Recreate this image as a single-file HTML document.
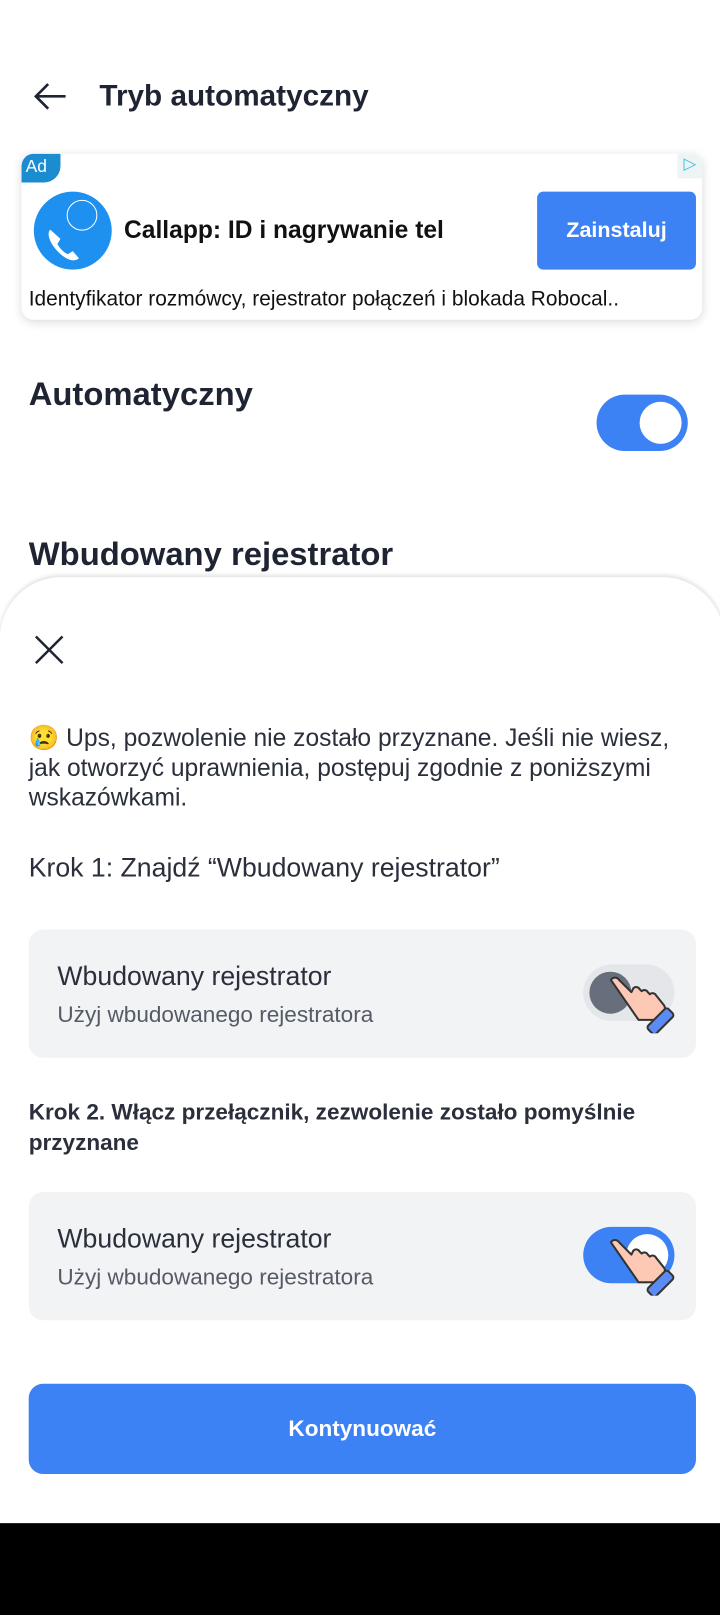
<!DOCTYPE html>
<html><head><meta charset="utf-8"><style>
*{margin:0;padding:0;box-sizing:border-box}
body{width:720px;height:1600px;position:relative;background:#fff;font-family:"Liberation Sans",sans-serif;color:#1f2433;overflow:hidden}
#w{position:absolute;left:0;top:0;width:706px;height:1569px;transform:scale(1.025);transform-origin:0 0}
.a{position:absolute}
</style></head><body><div id="w">
<svg class="a" style="left:32px;top:80px" width="34" height="28" viewBox="0 0 34 28"><path d="M32 14H3M15 2L3 14l12 12" stroke="#1f2433" stroke-width="2.6" fill="none"/></svg>
<div class="a" style="left:97px;top:78px;font-size:29px;font-weight:bold">Tryb automatyczny</div>
<div class="a" style="left:21px;top:150px;width:664px;height:162px;border-radius:12px;background:#fff;box-shadow:0 2px 10px rgba(0,0,0,.15);overflow:hidden">
<div class="a" style="left:0;top:0;width:38px;height:28px;background:#1a8ccf;border-radius:0 0 16px 0;color:#fff;font-size:17px;padding:3px 0 0 4px">Ad</div>
<div class="a" style="left:640px;top:0;width:24px;height:24px;background:#eef3f6;color:#37c0e0;font-size:16px;text-align:center">▷</div>
<div class="a" style="left:12px;top:37px;width:76px;height:76px;border-radius:50%;background:#1e90f0"></div>
<div class="a" style="left:44px;top:45px;width:30px;height:30px;border-radius:50%;border:1.5px solid #fff"></div>
<svg class="a" style="left:22px;top:70px" width="36" height="36" viewBox="0 0 36 36"><path d="M6 4c-4 4 0 14 8 22s16 10 20 6l-6-7-5 3c-4-2-8-6-10-10l3-5z" fill="#fff"/></svg>
<div class="a" style="left:100px;top:61px;font-size:24px;font-weight:bold;color:#111">Callapp: ID i nagrywanie tel</div>
<div class="a" style="left:503px;top:37px;width:155px;height:76px;background:#3d82f4;border-radius:6px;color:#fff;font-size:21px;font-weight:bold;text-align:center;line-height:76px">Zainstaluj</div>
<div class="a" style="left:7px;top:130px;font-size:21px;color:#111;white-space:nowrap;transform:scaleX(.97);transform-origin:0 0">Identyfikator rozmówcy, rejestrator połączeń i blokada Robocal..</div>
</div>
<div class="a" style="left:28px;top:366px;font-size:32px;font-weight:bold">Automatyczny</div>
<div class="a" style="left:582px;top:385px;width:89px;height:55px;border-radius:28px;background:#3d82f4"><div class="a" style="left:42px;top:7px;width:41px;height:41px;border-radius:50%;background:#fff"></div></div>
<div class="a" style="left:28px;top:522px;font-size:32px;font-weight:bold">Wbudowany rejestrator</div>
<div class="a" style="left:0;top:563px;width:706px;height:930px;background:#fff;border-radius:60px 60px 0 0;box-shadow:0 -2px 4px rgba(0,0,0,.12)"></div>
<svg class="a" style="left:33px;top:619px" width="30" height="30" viewBox="0 0 30 30"><path d="M2 2L28 28M28 2L2 28" stroke="#1f2433" stroke-width="2.4"/></svg>
<div class="a" style="left:28px;top:706px;width:650px;font-size:24px;line-height:29px;color:#2a2f3b">😢 Ups, pozwolenie nie zostało przyznane. Jeśli nie wiesz, jak otworzyć uprawnienia, postępuj zgodnie z poniższymi wskazówkami.</div>
<div class="a" style="left:28px;top:831px;font-size:26px;color:#2a2f3b">Krok 1: Znajdź “Wbudowany rejestrator”</div>
<div class="a" style="left:28px;top:907px;width:651px;height:125px;background:#f2f3f5;border-radius:14px"></div>
<div class="a" style="left:56px;top:937px;font-size:26px;color:#2a2f3b">Wbudowany rejestrator</div>
<div class="a" style="left:56px;top:977px;font-size:22px;color:#555b66">Użyj wbudowanego rejestratora</div>
<div class="a" style="left:569px;top:941px;width:89px;height:55px;border-radius:28px;background:#e4e6ea"><div class="a" style="left:6px;top:7px;width:41px;height:41px;border-radius:50%;background:#676e7c"></div></div>
<div class="a" style="left:28px;top:1070px;width:660px;font-size:22px;font-weight:bold;line-height:30px;color:#2a2f3b">Krok 2. Włącz przełącznik, zezwolenie zostało pomyślnie przyznane</div>
<div class="a" style="left:28px;top:1163px;width:651px;height:125px;background:#f2f3f5;border-radius:14px"></div>
<div class="a" style="left:56px;top:1193px;font-size:26px;color:#2a2f3b">Wbudowany rejestrator</div>
<div class="a" style="left:56px;top:1233px;font-size:22px;color:#555b66">Użyj wbudowanego rejestratora</div>
<div class="a" style="left:569px;top:1197px;width:89px;height:55px;border-radius:28px;background:#3d82f4"><div class="a" style="left:42px;top:7px;width:41px;height:41px;border-radius:50%;background:#fff"></div></div>
<svg class="a" style="left:590px;top:948px" width="72" height="60" viewBox="0 0 72 60"><path d="M6 8c2-3 6-3 8 0l12 12 2-4c2-2 5-1 6 1l2 2c2-2 5-1 6 1l2 2c2-2 5-1 6 1l8 10c2 4 0 8-3 10l-6 4-16 0z" fill="#fdc9b4" stroke="#333" stroke-width="2" stroke-linejoin="round"/><rect x="40" y="43" width="28" height="11" rx="3" transform="rotate(-45 54 48)" fill="#5b8cf5" stroke="#333" stroke-width="2"/></svg>
<svg class="a" style="left:590px;top:1204px" width="72" height="60" viewBox="0 0 72 60"><path d="M6 8c2-3 6-3 8 0l12 12 2-4c2-2 5-1 6 1l2 2c2-2 5-1 6 1l2 2c2-2 5-1 6 1l8 10c2 4 0 8-3 10l-6 4-16 0z" fill="#fdc9b4" stroke="#333" stroke-width="2" stroke-linejoin="round"/><rect x="40" y="43" width="28" height="11" rx="3" transform="rotate(-45 54 48)" fill="#5b8cf5" stroke="#333" stroke-width="2"/></svg>
<div class="a" style="left:28px;top:1350px;width:651px;height:88px;background:#3d82f4;border-radius:14px;color:#fff;font-size:22px;font-weight:bold;text-align:center;line-height:88px">Kontynuować</div>
<div class="a" style="left:0;top:1486px;width:706px;height:90px;background:#000"></div>
</div></body></html>
